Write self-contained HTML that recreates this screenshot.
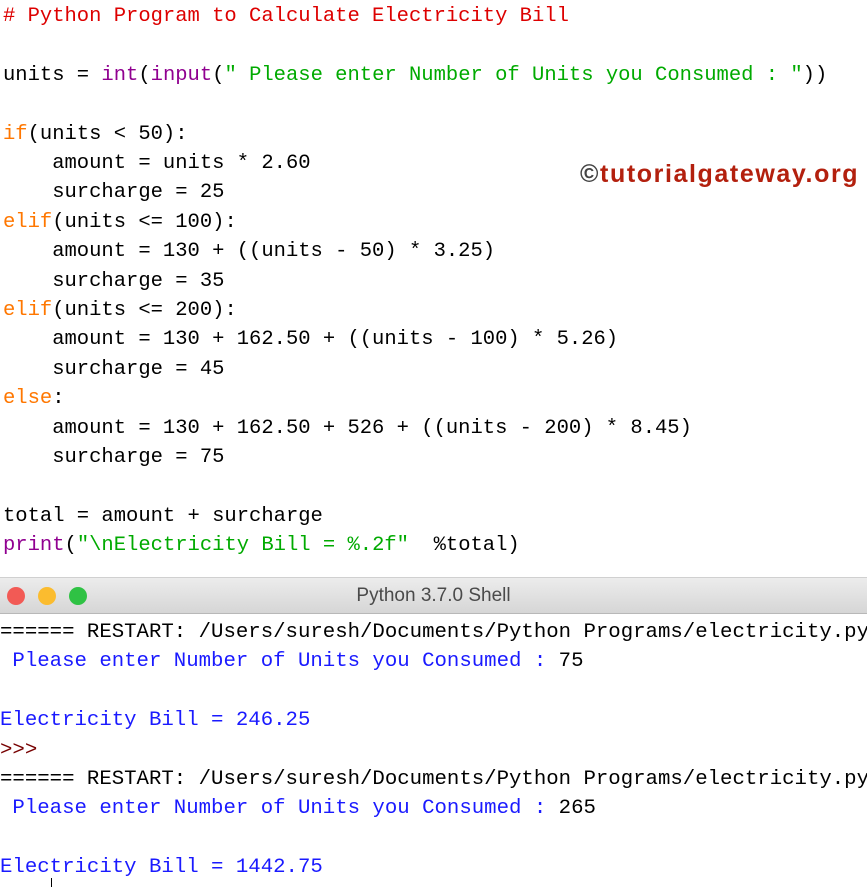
<!DOCTYPE html>
<html><head><meta charset="utf-8"><style>
body{margin:0;width:867px;height:887px;background:#fff;overflow:hidden;position:relative}
pre{margin:0;font-family:"Liberation Mono",monospace;font-size:20.5px;line-height:29.4px;color:#000;position:absolute;left:3px;white-space:pre}
.c{color:#dd0000}.k{color:#ff7700}.b{color:#900090}.s{color:#00aa00}.o{color:#1a1aff}.p{color:#770000}
#bar{position:absolute;left:0;top:577px;width:867px;height:35px;background:linear-gradient(#ececec,#d6d6d6);border-top:1px solid #d0d0d0;border-bottom:1px solid #b8b8b8}
.d{position:absolute;top:9px;width:18px;height:18px;border-radius:50%}
#t{position:absolute;left:0;right:0;top:7px;text-align:center;font-family:"Liberation Sans",sans-serif;font-size:19px;color:#4a4a4a}
#w{position:absolute;left:580px;top:160px;font-family:"Liberation Sans",sans-serif;font-weight:bold;font-size:25px;letter-spacing:1.6px;color:#b3200e}
#w span{color:#444}
</style></head><body>
<pre style="top:2px"><span class="c"># Python Program to Calculate Electricity Bill</span>

units = <span class="b">int</span>(<span class="b">input</span>(<span class="s">" Please enter Number of Units you Consumed : "</span>))

<span class="k">if</span>(units &lt; 50):
    amount = units * 2.60
    surcharge = 25
<span class="k">elif</span>(units &lt;= 100):
    amount = 130 + ((units - 50) * 3.25)
    surcharge = 35
<span class="k">elif</span>(units &lt;= 200):
    amount = 130 + 162.50 + ((units - 100) * 5.26)
    surcharge = 45
<span class="k">else</span>:
    amount = 130 + 162.50 + 526 + ((units - 200) * 8.45)
    surcharge = 75

total = amount + surcharge
<span class="b">print</span>(<span class="s">"\nElectricity Bill = %.2f"</span>  %total)</pre>
<div id="w"><span>©</span>tutorialgateway.org</div>
<div id="bar">
<div class="d" style="left:7px;background:#f25a55"></div>
<div class="d" style="left:38px;background:#fbbc2f"></div>
<div class="d" style="left:69px;background:#2fc244"></div>
<div id="t">Python 3.7.0 Shell</div>
</div>
<pre style="top:618px;left:0;font-size:20.7px">====== RESTART: /Users/suresh/Documents/Python Programs/electricity.py
<span class="o"> Please enter Number of Units you Consumed : </span>75

<span class="o">Electricity Bill = 246.25</span>
<span class="p">&gt;&gt;&gt;</span>
====== RESTART: /Users/suresh/Documents/Python Programs/electricity.py
<span class="o"> Please enter Number of Units you Consumed : </span>265

<span class="o">Electricity Bill = 1442.75</span></pre>
<div style="position:absolute;left:51px;top:878px;width:1px;height:9px;background:#000"></div>
</body></html>
